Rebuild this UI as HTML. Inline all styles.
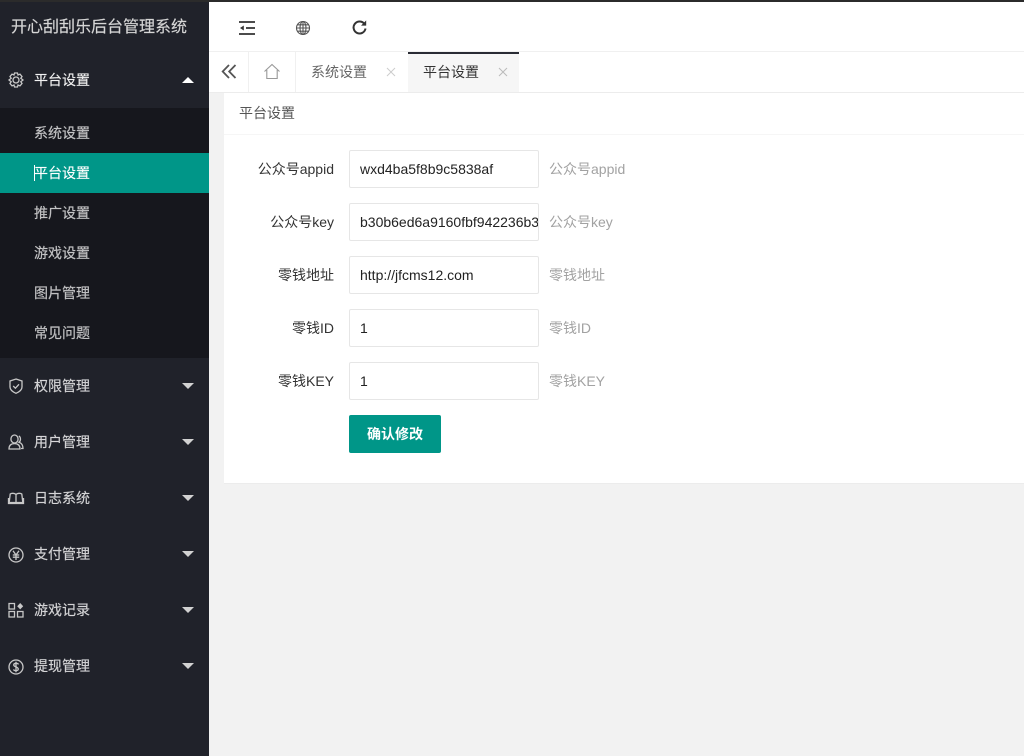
<!DOCTYPE html>
<html lang="zh"><head><meta charset="utf-8"><title>平台设置</title>
<style>
*{box-sizing:border-box}
html,body{margin:0;padding:0;width:1024px;height:756px;overflow:hidden;background:#f2f2f2;font:14px "Liberation Sans","Noto Sans CJK SC",sans-serif;color:#333}
.a{position:absolute}
#side{left:0;top:0;width:209px;height:756px;background:#20222a;border-top:2px solid #2b2b2b}
.title{left:11px;top:17px;font-size:16px;line-height:22px;color:#d6d6d6;white-space:nowrap;-webkit-text-stroke:.15px #d6d6d6}
.txt{left:34px;line-height:20px;white-space:nowrap;color:rgba(255,255,255,.78);-webkit-text-stroke:.2px rgba(255,255,255,.6)}
.sub{left:0;top:108px;width:209px;height:250px;background:#16171d}
.act{left:0;top:153px;width:209px;height:40px;background:#009688}
.tri{left:182px;width:0;height:0;border-left:6px solid transparent;border-right:6px solid transparent}
.dn{border-top:6px solid #d2d2d2}
.up{border-bottom:6px solid #fff}
svg{position:absolute;fill:none;overflow:visible}
.ic{left:8px;width:16px;height:16px;stroke:#c8c8c8;stroke-width:1.3}
.lab{left:224px;width:110px;text-align:right;line-height:20px;color:#333;white-space:nowrap}
.inp{left:349px;width:190px;height:38px;border:1px solid #e6e6e6;background:#fff;padding:0 0 0 10px;line-height:36px;color:#222;overflow:hidden;white-space:nowrap;border-radius:2px}
.aux{left:549px;line-height:20px;color:#a2a2a2;white-space:nowrap}
</style></head><body>
<div class="a" style="left:209px;top:0;width:815px;height:2px;background:#2b2b2b"></div>
<div class="a" style="left:209px;top:2px;width:815px;height:50px;background:#fff;border-bottom:1px solid #f0f0f0"></div>
<svg style="left:239px;top:20px;width:16px;height:16px;stroke:#333;stroke-width:1.8"><path d="M0 2H16M7 8H16M0 14H16"/><path d="M4.8 5.5V10.5L1 8Z" fill="#333" stroke="none"/></svg>
<svg style="left:296px;top:21px;width:14px;height:14px;stroke:#555;stroke-width:1.1"><circle cx="7" cy="7" r="6.5"/><ellipse cx="7" cy="7" rx="3" ry="6.5"/><path d="M7 .5V13.5M.5 7H13.5M1.5 3.8H12.5M1.5 10.2H12.5"/></svg>
<svg style="left:352px;top:20px;width:15px;height:15px;stroke:#333;stroke-width:2"><path d="M12.6 4.2A6 6 0 1 0 13.5 8.5"/><path d="M14.2 .4V5.6H9Z" fill="#333" stroke="none"/></svg>

<div class="a" style="left:209px;top:52px;width:815px;height:41px;background:#fff;border-bottom:1px solid #ececec"></div>
<div class="a" style="left:248px;top:52px;width:1px;height:40px;background:#f0f0f0"></div>
<div class="a" style="left:295px;top:52px;width:1px;height:40px;background:#f0f0f0"></div>
<svg style="left:222px;top:65px;width:14px;height:14px;stroke:#555;stroke-width:1.8"><path d="M7 0L.7 6.5L7 13M13.5 0L7.2 6.5L13.5 13"/></svg>
<svg style="left:264px;top:64px;width:16px;height:15px;stroke:#999;stroke-width:1.1"><path d="M.5 7.5L8 .5L15.5 7.5M2.8 6V14.5H13.2V6"/></svg>
<div class="a" style="left:311px;top:62px;line-height:20px;color:#666">系统设置</div>
<svg style="left:387px;top:68px;width:8px;height:8px;stroke:#ccc;stroke-width:1"><path d="M0 0L8 8M8 0L0 8"/></svg>
<div class="a" style="left:408px;top:52px;width:111px;height:40px;background:#f6f6f6"></div>
<div class="a" style="left:408px;top:52px;width:111px;height:2px;background:#292b34"></div>
<div class="a" style="left:423px;top:62px;line-height:20px;color:#333">平台设置</div>
<svg style="left:499px;top:68px;width:8px;height:8px;stroke:#bbb;stroke-width:1"><path d="M0 0L8 8M8 0L0 8"/></svg>

<div class="a" style="left:224px;top:93px;width:800px;height:391px;background:#fff;border-bottom:1px solid #ececec"></div>
<div class="a" style="left:224px;top:134px;width:800px;height:1px;background:#f6f6f6"></div>
<div class="a" style="left:239px;top:103px;line-height:20px;color:#555">平台设置</div>

<div class="a lab" style="top:159px">公众号appid</div><div class="a inp" style="top:150px">wxd4ba5f8b9c5838af</div><div class="a aux" style="top:159px">公众号appid</div>
<div class="a lab" style="top:212px">公众号key</div><div class="a inp" style="top:203px;padding-right:0">b30b6ed6a9160fbf942236b3</div><div class="a aux" style="top:212px">公众号key</div>
<div class="a lab" style="top:265px">零钱地址</div><div class="a inp" style="top:256px">http://jfcms12.com</div><div class="a aux" style="top:265px">零钱地址</div>
<div class="a lab" style="top:318px">零钱ID</div><div class="a inp" style="top:309px">1</div><div class="a aux" style="top:318px">零钱ID</div>
<div class="a lab" style="top:371px">零钱KEY</div><div class="a inp" style="top:362px">1</div><div class="a aux" style="top:371px">零钱KEY</div>
<div class="a" style="left:349px;top:415px;width:92px;height:38px;background:#009688;color:#fff;text-align:center;line-height:38px;border-radius:2px;font-weight:bold">确认修改</div>

<div id="side" class="a"></div>
<div class="a title">开心刮刮乐后台管理系统</div>
<div class="a sub"></div><div class="a act"></div>
<svg class="ic" style="top:72px" viewBox="0 0 16 16"><path d="M6.5 1H9.5L10 3L12 2.2L14 4.5L12.8 6.2L15 8L12.8 9.8L14 11.5L12 13.8L10 13L9.5 15H6.5L6 13L4 13.8L2 11.5L3.2 9.8L1 8L3.2 6.2L2 4.5L4 2.2L6 3Z"/><circle cx="8" cy="8" r="3"/></svg>
<div class="a txt" style="top:70px;color:#f0f0f0">平台设置</div><div class="a tri up" style="top:77px"></div>
<div class="a txt" style="top:123px;color:rgba(255,255,255,.7)">系统设置</div>
<div class="a txt" style="top:163px;color:#fff">平台设置</div>
<div class="a" style="left:34px;top:165px;width:1px;height:16px;background:#fff"></div>
<div class="a txt" style="top:203px;color:rgba(255,255,255,.7)">推广设置</div>
<div class="a txt" style="top:243px;color:rgba(255,255,255,.7)">游戏设置</div>
<div class="a txt" style="top:283px;color:rgba(255,255,255,.7)">图片管理</div>
<div class="a txt" style="top:323px;color:rgba(255,255,255,.7)">常见问题</div>

<svg class="ic" style="top:378px" viewBox="0 0 16 16"><path d="M8 1L14 3V9C14 12 11 14 8 15.3C5 14 2 12 2 9V3Z"/><path d="M5.2 8L7.4 10.2L11 6.3"/></svg>
<div class="a txt" style="top:376px">权限管理</div><div class="a tri dn" style="top:383px"></div>
<svg class="ic" style="top:434px" viewBox="0 0 16 16"><ellipse cx="6.5" cy="5" rx="3.6" ry="4"/><path d="M1 15C1 11.5 3 9.6 6.5 9.6S12 11.5 12 15ZM10.8 2C13 3 13 7 11 8.2C13.5 9 15 11 15 14.5H13"/></svg>
<div class="a txt" style="top:432px">用户管理</div><div class="a tri dn" style="top:439px"></div>
<svg class="ic" style="top:490px" viewBox="0 0 16 16"><path d="M8 4.5C6.5 3 3.5 3 2.2 4L1.2 12.5H14.8L13.8 4C12.5 3 9.5 3 8 4.5ZM8 4.5V12.5M.5 8V13.5H15.5V8"/></svg>
<div class="a txt" style="top:488px">日志系统</div><div class="a tri dn" style="top:495px"></div>
<svg class="ic" style="top:547px" viewBox="0 0 16 16"><circle cx="8" cy="8" r="7"/><path d="M5 3.8L8 8L11 3.8M4.8 8H11.2M4.8 10.2H11.2M8 8V13"/></svg>
<div class="a txt" style="top:544px">支付管理</div><div class="a tri dn" style="top:551px"></div>
<svg class="ic" style="top:602px" viewBox="0 0 16 16"><path d="M1 1.5H6.5V7H1ZM1 9.5H6.5V15H1ZM9.5 9.5H15V15H9.5Z"/><path d="M12.2 1L15.2 4.2L12.2 7.4L9.2 4.2Z" fill="#c8c8c8" stroke="none"/></svg>
<div class="a txt" style="top:600px">游戏记录</div><div class="a tri dn" style="top:607px"></div>
<svg class="ic" style="top:659px" viewBox="0 0 16 16"><circle cx="8" cy="8" r="7"/><path d="M10.4 5.4C10 4 6 3.8 5.7 5.8C5.4 8 10.5 7.8 10.3 10.2C10 12.2 6 12 5.5 10.4M8 2.8V13.2"/></svg>
<div class="a txt" style="top:656px">提现管理</div><div class="a tri dn" style="top:663px"></div>
</body></html>
